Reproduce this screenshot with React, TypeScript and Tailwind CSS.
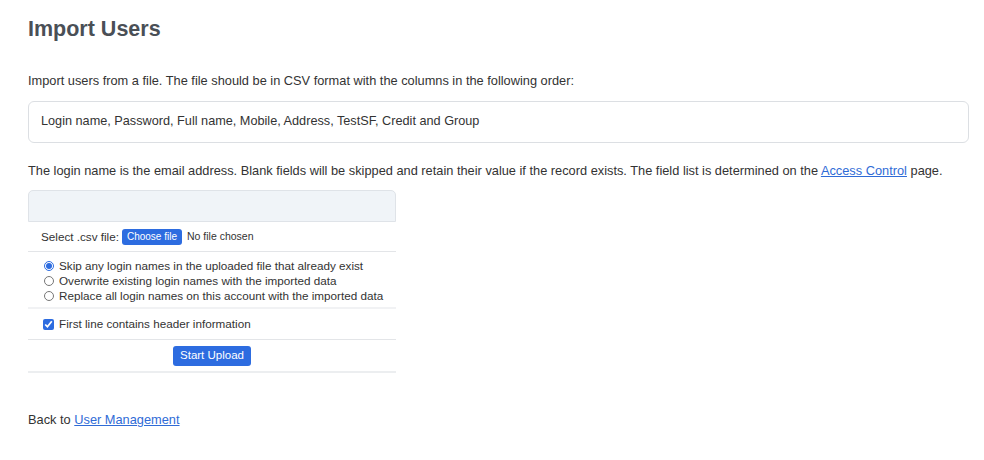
export default function App() {
  return (
    <div
      className="min-h-[460px] bg-white pl-[28px] pr-[15px] pt-[16px] text-[#333333]"
      style={{ fontFamily: '"Liberation Sans", Arial, sans-serif' }}
    >
      {/* Title */}
      <h1 className="text-[21.5px] font-bold leading-[26px] text-[#4a4f56]">Import Users</h1>

      <p className="mt-[30px] text-[12.8px] leading-[18px]">
        Import users from a file. The file should be in CSV format with the columns in the following order:
      </p>

      <div className="mt-[11px] flex h-[42px] items-center rounded-[6px] border border-[#dcdfe3] px-[12px] text-[12.7px]">
        Login name, Password, Full name, Mobile, Address, TestSF, Credit and Group
      </div>

      <p className="mt-[19px] text-[12.8px] leading-[18px]">
        The login name is the email address. Blank fields will be skipped and retain their value if the record
        exists. The field list is determined on the{" "}
        <a href="#" className="text-[#2f6bd6] underline">
          Access Control
        </a>{" "}
        page.
      </p>

      {/* Upload form */}
      <div className="mt-[10px] w-[368px] whitespace-nowrap text-[11.7px]">
        <div className="h-[32px] rounded-t-[5px] border border-[#dfe3e8] bg-[#f0f4f8]" />

        <div className="flex h-[30px] items-center border-b border-[#e3e5e8] px-[13px]">
          <span>Select .csv file:</span>
          <span className="ml-[3px] flex h-[16px] items-center rounded-[3px] bg-[#2d6ce0] px-[5px] text-[10px] text-white">
            Choose file
          </span>
          <span className="ml-[5px] text-[10.5px]">No file chosen</span>
        </div>

        <div className="flex flex-col border-b-2 border-[#f1f2f4] pb-[4px] pl-[16px] pt-[6px]">
          {[
            "Skip any login names in the uploaded file that already exist",
            "Overwrite existing login names with the imported data",
            "Replace all login names on this account with the imported data",
          ].map((label, i) => (
            <label key={label} className="flex h-[15px] items-center">
              <input
                type="radio"
                name="mode"
                defaultChecked={i === 0}
                className="m-0 h-[10px] w-[10px] shrink-0 accent-[#2d6ce0]"
              />
              <span className="ml-[5px] shrink-0">{label}</span>
            </label>
          ))}
        </div>

        <label className="flex h-[31px] items-center border-b border-[#e3e5e8] px-[15px]">
          <input type="checkbox" defaultChecked className="m-0 h-[11px] w-[11px] accent-[#2d6ce0]" />
          <span className="ml-[5px]">First line contains header information</span>
        </label>

        <div className="flex h-[33px] items-center justify-center border-b-2 border-[#eceef0]">
          <button className="flex h-[20px] items-center rounded-[3px] bg-[#2d6ce0] px-[7px] text-[11.5px] text-white">
            Start Upload
          </button>
        </div>
      </div>

      <p className="mt-[38px] text-[12.8px] leading-[18px]">
        Back to{" "}
        <a href="#" className="text-[#2f6bd6] underline">
          User Management
        </a>
      </p>
    </div>
  );
}
